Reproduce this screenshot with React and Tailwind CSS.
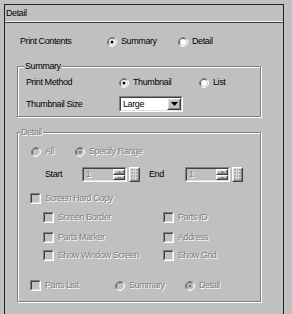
const font = "font-['Liberation_Sans',Arial,sans-serif] text-[9px] tracking-[-0.4px] leading-none";
const dis = "text-[#808080] [text-shadow:1px_1px_0_#fff]";

const Radio = ({ checked, disabled }) => (
    <svg width="10" height="10" viewBox="0 0 10 10" className="shrink-0">
        <path d="M1.82 8.18 A4.5 4.5 0 0 1 8.18 1.82" fill="none" stroke="#808080" />
        <path d="M8.18 1.82 A4.5 4.5 0 0 1 1.82 8.18" fill="none" stroke="#ffffff" />
        <path d="M2.53 7.47 A3.5 3.5 0 0 1 7.47 2.53" fill="none" stroke="#404040" />
        <path d="M7.47 2.53 A3.5 3.5 0 0 1 2.53 7.47" fill="none" stroke="#dfdfdf" />
        <circle cx="5" cy="5" r="3" fill={disabled ? '#c0c0c0' : '#ffffff'} />
        {checked && <circle cx="5" cy="5" r="1.5" fill={disabled ? '#808080' : '#000000'} />}
    </svg>
);

const RadioItem = ({ label, checked, disabled, width }) => (
    <div className={`flex items-center gap-[4px] ${width}`}>
        <Radio checked={checked} disabled={disabled} />
        <span className={disabled ? dis : 'text-black'}>{label}</span>
    </div>
);

const Check = () => (
    <div className="w-[11px] h-[11px] shrink-0 border border-t-[#808080] border-l-[#808080] border-r-white border-b-white">
        <div className="w-full h-full border border-t-[#404040] border-l-[#404040] border-r-[#dfdfdf] border-b-[#dfdfdf] bg-[#c0c0c0]" />
    </div>
);

const CheckItem = ({ label, width }) => (
    <div className={`flex items-center gap-[4px] ${width}`}>
        <Check />
        <span className={dis}>{label}</span>
    </div>
);

const Raised = ({ className, children }) => (
    <div className={`border border-t-white border-l-white border-r-[#404040] border-b-[#404040] ${className}`}>
        <div className="w-full h-full border border-t-[#dfdfdf] border-l-[#dfdfdf] border-r-[#808080] border-b-[#808080] bg-[#c0c0c0] flex items-center justify-center">
            {children}
        </div>
    </div>
);

const Sunken = ({ className, children }) => (
    <div className={`border border-t-[#808080] border-l-[#808080] border-r-white border-b-white ${className}`}>
        <div className="w-full h-full border border-t-[#404040] border-l-[#404040] border-r-[#dfdfdf] border-b-[#dfdfdf] flex items-center">
            {children}
        </div>
    </div>
);

const Spin = () => (
    <div className="flex items-center gap-[2px]">
        <Sunken className="w-[45px] h-[15px] bg-[#c0c0c0]">
            <span className={`flex-1 pl-[2px] ${dis}`}>1</span>
            <div className="flex flex-col w-[12px] h-full">
                <Raised className="w-full h-[6px]">
                    <svg width="5" height="2" viewBox="0 0 5 2"><path d="M0 2 L2.5 0 L5 2 Z" fill="#808080" /></svg>
                </Raised>
                <Raised className="w-full h-[5px]">
                    <svg width="5" height="2" viewBox="0 0 5 2"><path d="M0 0 L2.5 2 L5 0 Z" fill="#808080" /></svg>
                </Raised>
            </div>
        </Sunken>
        <Raised className="w-[11px] h-[15px]">
            <svg width="7" height="11" viewBox="0 0 7 11">
                <rect x="0" y="0" width="7" height="11" fill="#a8a8a8" />
                <path d="M0 2.5 H7 M0 5.5 H7 M0 8.5 H7 M2.5 0 V11 M4.5 0 V11" stroke="#d8d8d8" strokeWidth="1" />
            </svg>
        </Raised>
    </div>
);

const Group = ({ label, labelLeft, className, children }) => (
    <div className={`relative ml-[12px] w-[244px] border border-[#808080] shadow-[inset_1px_1px_0_#fff,1px_1px_0_#fff] ${className}`}>
        <span className={`absolute top-[-5px] ${labelLeft} px-[1px] bg-[#c0c0c0] ${label === 'Detail' ? dis : 'text-black'}`}>
            {label}
        </span>
        {children}
    </div>
);

export default function App() {
    return (
        <div className={`w-[292px] h-[314px] overflow-hidden bg-[#c0c0c0] pt-[4px] pl-[4px] ${font}`}>
            <div className="w-[280px] h-[330px] border-x border-t border-[#202020]">
                <div className="h-[17px] flex items-center pl-[1px] border-b border-[#f0f0f0] text-black">Detail</div>
                <div className="h-px bg-[#404040]" />

                <div className="mt-[12px] h-[13px] flex items-center pl-[15px]">
                    <span className="w-[87px]">Print Contents</span>
                    <RadioItem label="Summary" checked width="w-[71px]" />
                    <RadioItem label="Detail" />
                </div>

                <Group label="Summary" labelLeft="left-[6px]" className="mt-[18px] h-[51px] pt-[9px] pl-[8px]">
                    <div className="h-[13px] flex items-center">
                        <span className="w-[93px]">Print Method</span>
                        <RadioItem label="Thumbnail" checked width="w-[80px]" />
                        <RadioItem label="List" />
                    </div>
                    <div className="mt-[7px] h-[16px] flex items-center">
                        <span className="w-[93px]">Thumbnail Size</span>
                        <Sunken className="w-[64px] h-[16px] bg-white">
                            <span className="flex-1 pl-[2px] text-black">Large</span>
                            <Raised className="w-[14px] h-full">
                                <svg width="7" height="4" viewBox="0 0 7 4"><path d="M0 0 H7 L3.5 4 Z" fill="#000" /></svg>
                            </Raised>
                        </Sunken>
                    </div>
                </Group>

                <Group label="Detail" labelLeft="left-[2px]" className="mt-[15px] h-[170px] pt-[12px]">
                    <div className="h-[13px] flex items-center pl-[13px]">
                        <RadioItem label="All" disabled width="w-[44px]" />
                        <RadioItem label="Specify Range" checked disabled />
                    </div>
                    <div className="mt-[9px] h-[15px] flex items-center pl-[27px]">
                        <span className="w-[37px] text-black">Start</span>
                        <Spin />
                        <span className="ml-[9px] w-[36px] text-black">End</span>
                        <Spin />
                    </div>
                    <div className="mt-[10px] h-[13px] flex items-center pl-[12px]">
                        <CheckItem label="Screen Hard Copy" />
                    </div>
                    <div className="mt-[6px] h-[13px] flex items-center pl-[25px]">
                        <CheckItem label="Screen Border" width="w-[120px]" />
                        <CheckItem label="Parts ID" />
                    </div>
                    <div className="mt-[7px] h-[13px] flex items-center pl-[25px]">
                        <CheckItem label="Parts Marker" width="w-[120px]" />
                        <CheckItem label="Address" />
                    </div>
                    <div className="mt-[5px] h-[13px] flex items-center pl-[25px]">
                        <CheckItem label="Show Window Screen" width="w-[120px]" />
                        <CheckItem label="Show Grid" />
                    </div>
                    <div className="mt-[17px] h-[13px] flex items-center pl-[12px]">
                        <CheckItem label="Parts List" width="w-[85px]" />
                        <RadioItem label="Summary" disabled width="w-[70px]" />
                        <RadioItem label="Detail" checked disabled />
                    </div>
                </Group>
            </div>
        </div>
    );
}
